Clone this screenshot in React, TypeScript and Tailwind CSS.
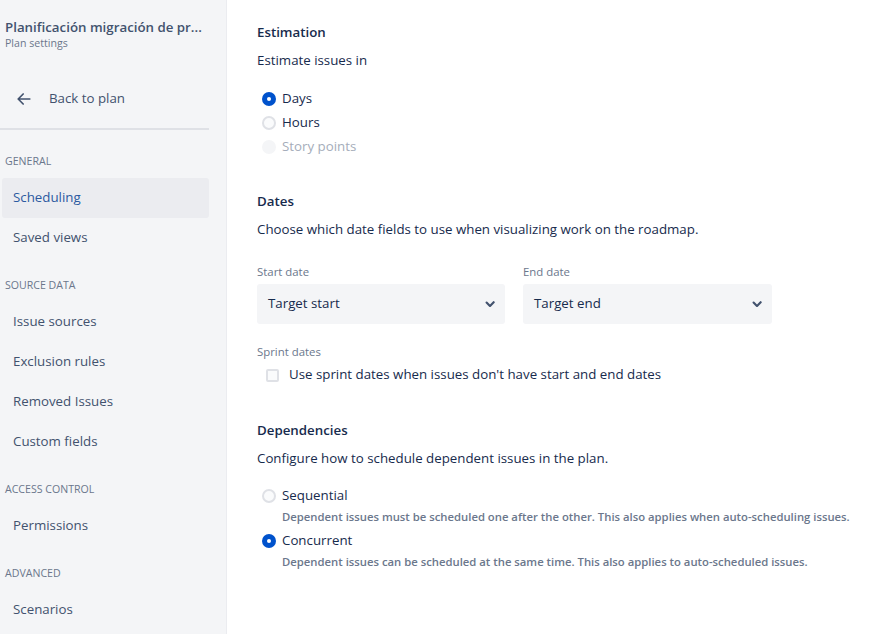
import React from "react";

const font = { fontFamily: '"Open Sans", "Noto Sans", sans-serif' };

function Radio({ state }: { state: "on" | "off" | "disabled" }) {
  if (state === "on")
    return (
      <span className="w-[14px] h-[14px] rounded-full bg-[#0052cc] flex items-center justify-center shrink-0">
        <span className="w-[4px] h-[4px] rounded-full bg-white" />
      </span>
    );
  if (state === "off")
    return <span className="w-[14px] h-[14px] rounded-full border-2 border-[#dfe1e6] bg-[#fafbfc] shrink-0" />;
  return <span className="w-[14px] h-[14px] rounded-full bg-[#f4f5f7] shrink-0" />;
}

function Chevron() {
  return (
    <svg width="24" height="24" viewBox="0 0 24 24" className="text-[#42526e]">
      <path d="M7.8 9.8a1.1 1.1 0 0 1 1.5 0L12 12.5l2.7-2.7a1.1 1.1 0 1 1 1.5 1.5l-3.4 3.4a1.1 1.1 0 0 1-1.6 0l-3.4-3.4a1.1 1.1 0 0 1 0-1.5z" fill="currentColor" />
    </svg>
  );
}

function NavHeading({ children }: { children: React.ReactNode }) {
  return <div className="h-8 flex items-center pl-[3px] text-[10.6px] text-[#6b778c] uppercase">{children}</div>;
}

function NavItem({ children, active }: { children: React.ReactNode; active?: boolean }) {
  return (
    <div
      className={
        "h-10 flex items-center pl-[11px] text-[13.3px] " +
        (active ? "bg-[#ebecf0] text-[#2c5aa0] rounded-[3px]" : "text-[#42526e]")
      }
    >
      {children}
    </div>
  );
}

export default function App() {
  return (
    <div className="flex w-[895px] h-[634px] bg-white overflow-hidden" style={font}>
      <aside className="w-[227px] shrink-0 h-full bg-[#f4f5f7] border-r border-[#ebecf0] flex flex-col">
        <div className="pl-[5px] pt-[17px]">
          <div className="text-[13.3px] font-semibold text-[#42526e] leading-[20px] whitespace-nowrap">
            Planificación migración de pr...
          </div>
          <div className="text-[10.6px] text-[#6b778c] leading-[12px]">Plan settings</div>
        </div>
        <div className="mt-[34px] h-[32px] flex items-center pl-[14px] pr-2 w-[209px]">
          <svg width="20" height="20" viewBox="0 0 24 24" className="text-[#42526e]">
            <path d="M19 12H6M11 6l-6 6 6 6" stroke="currentColor" strokeWidth="2" fill="none" strokeLinecap="round" strokeLinejoin="round" />
          </svg>
          <span className="ml-[15px] text-[13.3px] text-[#42526e]">Back to plan</span>
        </div>
        <div className="mt-[13px] h-[2px] w-[209px] bg-[#dfe1e6]" />
        <div className="mt-[16px] pl-[2px] w-[209px]">
          <NavHeading>General</NavHeading>
          <NavItem active>Scheduling</NavItem>
          <NavItem>Saved views</NavItem>
          <div className="h-3" />
          <NavHeading>Source data</NavHeading>
          <NavItem>Issue sources</NavItem>
          <NavItem>Exclusion rules</NavItem>
          <NavItem>Removed Issues</NavItem>
          <NavItem>Custom fields</NavItem>
          <div className="h-3" />
          <NavHeading>Access control</NavHeading>
          <NavItem>Permissions</NavItem>
          <div className="h-3" />
          <NavHeading>Advanced</NavHeading>
          <NavItem>Scenarios</NavItem>
        </div>
      </aside>

      <main className="flex-1 pl-[30px] pt-[22px] text-[#172b4d]">
        <section>
          <h2 className="text-[13.3px] font-semibold leading-[20px]">Estimation</h2>
          <p className="mt-[8px] text-[13.3px] leading-[20px]">Estimate issues in</p>
          <div className="mt-[17px] flex flex-col">
            <label className="h-6 flex items-center gap-[6px] pl-[5px] text-[13.3px]">
              <Radio state="on" /> Days
            </label>
            <label className="h-6 flex items-center gap-[6px] pl-[5px] text-[13.3px]">
              <Radio state="off" /> Hours
            </label>
            <label className="h-6 flex items-center gap-[6px] pl-[5px] text-[13.3px] text-[#a5adba]">
              <Radio state="disabled" /> Story points
            </label>
          </div>
        </section>

        <section className="mt-[32px]">
          <h2 className="text-[13.3px] font-semibold leading-[20px]">Dates</h2>
          <p className="mt-[8px] text-[13.3px] leading-[20px]">
            Choose which date fields to use when visualizing work on the roadmap.
          </p>
          <div className="mt-[25px] flex gap-[18px]">
            <div className="w-[248px]">
              <div className="text-[11.4px] text-[#6b778c] leading-[16px]">Start date</div>
              <div className="mt-[4px] h-10 rounded-[3px] bg-[#f4f5f7] flex items-center justify-between pl-[11px] pr-[3px] text-[13.3px]">
                <span>Target start</span>
                <Chevron />
              </div>
            </div>
            <div className="w-[249px]">
              <div className="text-[11.4px] text-[#6b778c] leading-[16px]">End date</div>
              <div className="mt-[4px] h-10 rounded-[3px] bg-[#f4f5f7] flex items-center justify-between pl-[11px] pr-[3px] text-[13.3px]">
                <span>Target end</span>
                <Chevron />
              </div>
            </div>
          </div>
          <div className="mt-[20px] text-[11.4px] text-[#6b778c] leading-[16px]">Sprint dates</div>
          <label className="mt-[3px] h-6 flex items-center pl-[9px] gap-[10px] text-[13.3px]">
            <span className="w-[13px] h-[13px] rounded-[2px] border-2 border-[#dfe1e6] bg-[#fafbfc] shrink-0" />
            Use sprint dates when issues don't have start and end dates
          </label>
        </section>

        <section className="mt-[33px]">
          <h2 className="text-[13.3px] font-semibold leading-[20px]">Dependencies</h2>
          <p className="mt-[8px] text-[13.3px] leading-[20px]">Configure how to schedule dependent issues in the plan.</p>
          <div className="mt-[16px] flex flex-col">
            <label className="h-6 flex items-center gap-[6px] pl-[5px] text-[13.3px]">
              <Radio state="off" /> Sequential
            </label>
            <div className="pl-[25px] text-[11.3px] font-semibold text-[#6b778c] leading-[18px]">
              Dependent issues must be scheduled one after the other. This also applies when auto-scheduling issues.
            </div>
            <label className="mt-[3px] h-6 flex items-center gap-[6px] pl-[5px] text-[13.3px]">
              <Radio state="on" /> Concurrent
            </label>
            <div className="pl-[25px] text-[11.3px] font-semibold text-[#6b778c] leading-[18px]">
              Dependent issues can be scheduled at the same time. This also applies to auto-scheduled issues.
            </div>
          </div>
        </section>
      </main>
    </div>
  );
}
